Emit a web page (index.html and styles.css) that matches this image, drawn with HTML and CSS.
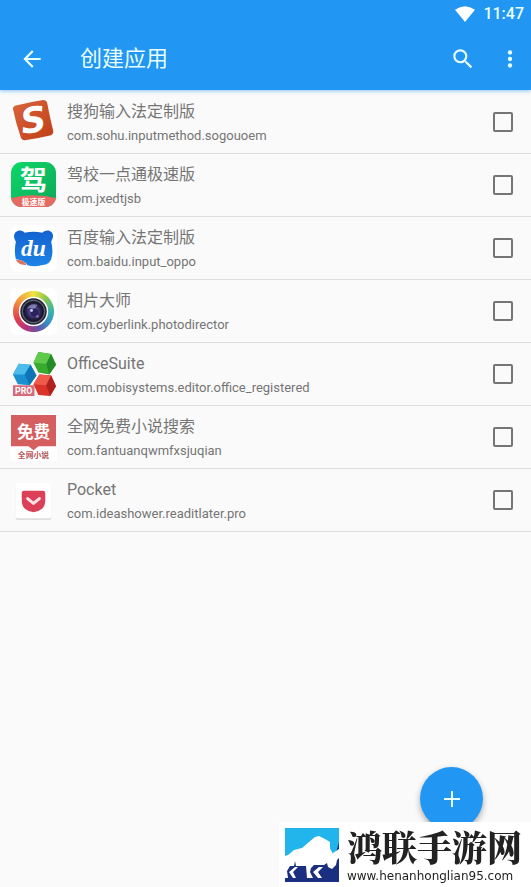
FILE: index.html
```html
<!DOCTYPE html>
<html lang="zh-CN">
<head>
<meta charset="utf-8">
<meta name="viewport" content="width=device-width, initial-scale=1">
<title>创建应用</title>
<link rel="stylesheet" href="styles.css">
</head>
<body>
<header class="app-bar">
  <div class="status-bar">
    <svg class="wifi" viewBox="0 0 20 16" aria-hidden="true"><path d="M0 3.800Q10-3.200 20 3.800L10 16Z"/></svg>
    <time class="clock">11:47</time>
  </div>
  <div class="toolbar">
    <button class="icon-button" type="button" aria-label="返回">
      <svg viewBox="0 0 24 24"><path d="M20 11H7.830l5.590-5.590L12 4l-8 8 8 8 1.410-1.410L7.830 13H20z"/></svg>
    </button>
    <h1 class="page-title">创建应用</h1>
    <button class="icon-button" type="button" aria-label="搜索">
      <svg viewBox="0 0 24 24"><path d="M15.500 14h-.790l-.280-.270A6.470 6.470 0 0 0 16 9.500 6.500 6.500 0 1 0 9.500 16c1.610 0 3.090-.590 4.230-1.570l.270.280v.790l5 4.990L20.490 19zm-6 0a4.500 4.500 0 1 1 0-9 4.500 4.500 0 0 1 0 9"/></svg>
    </button>
    <button class="icon-button menu-button" type="button" aria-label="更多">
      <svg viewBox="0 0 24 24"><circle cx="12" cy="6" r="2"/><circle cx="12" cy="12" r="2"/><circle cx="12" cy="18" r="2"/></svg>
    </button>
  </div>
</header>

<main>
  <ul class="app-list">
    <li><label class="app-row">
      <svg class="app-icon" viewBox="0 0 48 48" aria-hidden="true">
        <defs><linearGradient id="sogou" x1="0" y1="0" x2="1" y2="1"><stop offset="0" stop-color="#d9653d"/><stop offset="1" stop-color="#c03e17"/></linearGradient></defs>
        <path fill="url(#sogou)" d="M5 7Q20 3 34 1Q37 1 38 4Q40 15 44 32Q45 35 42 37Q30 40 15 42Q12 42 11 39Q6 25 3 10Q3 8 5 7Z"/>
        <text class="mark-s" x="24" y="34" transform="rotate(-8 24 23)">S</text>
      </svg>
      <span class="app-text"><span class="app-name">搜狗输入法定制版</span><span class="app-id">com.sohu.inputmethod.sogouoem</span></span>
      <input class="check" type="checkbox">
    </label></li>

    <li><label class="app-row">
      <svg class="app-icon" viewBox="0 0 48 48" aria-hidden="true">
        <defs><linearGradient id="drive" x1="0" y1="0" x2="1" y2="1"><stop offset="0" stop-color="#0bd968"/><stop offset="1" stop-color="#12a45a"/></linearGradient><clipPath id="drive-clip"><rect x="1" y="0" width="46" height="46" rx="11"/></clipPath></defs>
        <g clip-path="url(#drive-clip)"><path fill="url(#drive)" d="M0 0h48v48H0z"/><path fill="#e66a61" d="M0 37Q24 31 48 37V48H0z"/></g>
        <text class="mark-drive" x="24" y="29">驾</text>
        <text class="mark-speed" x="24" y="44">极速版</text>
      </svg>
      <span class="app-text"><span class="app-name">驾校一点通极速版</span><span class="app-id">com.jxedtjsb</span></span>
      <input class="check" type="checkbox">
    </label></li>

    <li><label class="app-row">
      <svg class="app-icon" viewBox="0 0 48 48" aria-hidden="true">
        <defs><linearGradient id="bear" x1="0" y1="0" x2="0" y2="1"><stop offset="0" stop-color="#1262cf"/><stop offset="1" stop-color="#1e84e6"/></linearGradient></defs>
        <rect width="48" height="48" rx="8" fill="#fff"/>
        <path fill="url(#bear)" d="M6 17C0 8 10 2 15 8Q24 6 33 8C39 2 48 8 42 17Q44 24 43 31Q42 41 32 41Q25 43 18 41Q15 36 6 35Q4 26 6 17Z"/>
        <path fill="#d9735e" d="M6 36Q14 35 17 41Q9 41 6 36Z"/>
        <text class="mark-du" x="24" y="32">du</text>
      </svg>
      <span class="app-text"><span class="app-name">百度输入法定制版</span><span class="app-id">com.baidu.input_oppo</span></span>
      <input class="check" type="checkbox">
    </label></li>

    <li><label class="app-row">
      <svg class="app-icon" viewBox="0 0 48 48" aria-hidden="true">
        <defs><radialGradient id="lens"><stop offset="0" stop-color="#7972c0"/><stop offset=".5" stop-color="#43377a"/><stop offset="1" stop-color="#101320"/></radialGradient></defs>
        <rect width="48" height="48" rx="6" fill="#fff"/>
        <foreignObject x="3" y="3" width="42" height="42"><div class="color-ring"></div></foreignObject>
        <circle cx="24" cy="24" r="15" fill="#fff"/>
        <circle cx="24" cy="24" r="13.500" fill="#242535"/>
        <circle cx="24" cy="24" r="11.500" fill="none" stroke="#707087" stroke-width="1"/>
        <circle cx="24" cy="24" r="10" fill="url(#lens)"/>
        <path d="M17 22Q20 15 28 17L25 22Q20 19 17 22Z" fill="#aaaedb" opacity=".6"/>
        <circle cx="25" cy="25" r="4" fill="#292359"/><circle cx="22" cy="23" r="1.500" fill="#c5cdef"/><circle cx="28" cy="29" r="1.500" fill="#8b63c1"/>
      </svg>
      <span class="app-text"><span class="app-name">相片大师</span><span class="app-id">com.cyberlink.photodirector</span></span>
      <input class="check" type="checkbox">
    </label></li>

    <li><label class="app-row">
      <svg class="app-icon" viewBox="0 0 48 48" aria-hidden="true">
        <path fill="#38aa30" d="M29 1L42 3 47 14 40 24 29 22 24 12Z"/><path fill="#5fc94a" d="M29 1L42 3 37 13 24 12Z"/><path fill="#238c27" d="M42 3L47 14 40 24 37 13Z"/>
        <path fill="#1b8fd0" d="M9 13L21 14 27 25 20 35 8 34 3 24Z"/><path fill="#4bbcec" d="M9 13L21 14 15 24 3 24Z"/><path fill="#0d75b4" d="M21 14L27 25 20 35 15 24Z"/>
        <path fill="#d9332b" d="M30 24L42 25 47 36 41 46 29 45 24 34Z"/><path fill="#ef5a4b" d="M30 24L42 25 37 35 24 34Z"/><path fill="#b0201f" d="M42 25L47 36 41 46 37 35Z"/>
        <rect x="3" y="35" width="22" height="11" fill="#d56b79"/>
        <text class="mark-pro" x="14" y="44">PRO</text>
      </svg>
      <span class="app-text"><span class="app-name">OfficeSuite</span><span class="app-id">com.mobisystems.editor.office_registered</span></span>
      <input class="check" type="checkbox">
    </label></li>

    <li><label class="app-row">
      <svg class="app-icon" viewBox="0 0 48 48" aria-hidden="true">
        <rect width="48" height="48" fill="#fff"/>
        <path fill="#d45e60" d="M1 1H47V33H29L24 37 19 33H1Z"/>
        <text class="mark-free" x="24" y="25">免费</text>
        <text class="mark-novel" x="24" y="45">全网小说</text>
      </svg>
      <span class="app-text"><span class="app-name">全网免费小说搜索</span><span class="app-id">com.fantuanqwmfxsjuqian</span></span>
      <input class="check" type="checkbox">
    </label></li>

    <li><label class="app-row">
      <svg class="app-icon" viewBox="0 0 48 48" aria-hidden="true">
        <rect x="6" y="7" width="36" height="37" rx="2" fill="#dedede"/><rect x="6" y="6" width="36" height="36" rx="2" fill="#fff"/>
        <path fill="#db4058" d="M14 14H34Q36 14 36 17V24Q36 30 32 33Q24 39 16 33Q12 30 12 24V17Q12 14 14 14Z"/>
        <path d="M18 22L24 27 30 22" fill="none" stroke="#ffe3e8" stroke-width="3" stroke-linecap="round" stroke-linejoin="round"/>
      </svg>
      <span class="app-text"><span class="app-name">Pocket</span><span class="app-id">com.ideashower.readitlater.pro</span></span>
      <input class="check" type="checkbox">
    </label></li>
  </ul>
</main>

<button class="fab" type="button" aria-label="添加"><svg viewBox="0 0 24 24"><path d="M12 4V20M4 12H20"/></svg></button>

<aside class="site-badge">
  <svg class="site-logo" viewBox="0 0 54 54" aria-hidden="true">
    <path fill="#22b5eb" d="M0 0H54V28H0Z"/><path fill="#1b2f80" d="M0 28H50L54 14V54H0Z"/>
    <path fill="#fff" d="M0 28L3 27 9 22 17 20 24 14 30 9 34 8 40 11 45 14 45 20 48 25 54 21V30L52 32 51 37 47 41 43 39 42 35 39 37 29 37 26 40 25 44 28 50H22L21 38H11L10 33 9 38H5L2 43 3 50H0Z"/>
    <path fill="#fff" d="M34 39H38L33 44 37 50H33L28 44ZM10 39H13L8 44 11 50H8L4 44Z"/>
    <path fill="#22b5eb" d="M48 9Q46 14 49 16Q53 19 51 23L48 22 48 26 45 20 45 14Z"/>
  </svg>
  <div class="site-text"><strong class="site-name">鸿联手游网</strong><span class="site-url">www.henanhonglian95.com</span></div>
</aside>
</body>
</html>
```
FILE: styles.css
```css
* {
  box-sizing: border-box;
}

body {
  margin: 0;
  min-height: 100vh;
  background: #fafafa;
  color: #757575;
  font-family: Roboto, "Noto Sans CJK SC", sans-serif;
}

button {
  padding: 0;
  border: 0;
  color: inherit;
}

.app-bar {
  position: relative;
  background: #2196f3;
  color: #e9ffff;
  box-shadow: 0 1px 4px #2196f388;
}

.status-bar {
  display: flex;
  align-items: center;
  justify-content: flex-end;
  gap: 8px;
  height: 28px;
  padding: 0 7px;
}

.wifi {
  width: 20px;
  height: 16px;
  fill: #fff;
}

.clock {
  font-size: 16px;
  font-weight: 500;
  line-height: 28px;
}

.toolbar {
  display: flex;
  align-items: center;
  height: 62px;
  padding: 0 5px 0 16px;
}

.icon-button {
  display: grid;
  place-items: center;
  width: 32px;
  height: 48px;
  background: none;
}

.icon-button svg {
  width: 26px;
  height: 26px;
  fill: currentColor;
}

.menu-button {
  margin-left: 15px;
}

.page-title {
  flex: 1;
  margin: 0 0 0 32px;
  font-size: 22px;
  font-weight: 400;
  line-height: 32px;
}

.app-list {
  margin: 0;
  padding: 1px 0 0;
  list-style: none;
}

.app-row {
  display: flex;
  align-items: center;
  gap: 10px;
  height: 63px;
  padding: 0 18px 0 10px;
  border-bottom: 1px solid #dedede;
}

.app-icon {
  flex: none;
  width: 47px;
  height: 47px;
}

.app-text {
  display: flex;
  flex: 1;
  flex-direction: column;
  gap: 2px;
  min-width: 0;
  padding-top: 2px;
}

.app-name {
  font-size: 16px;
  line-height: 24px;
}

.app-id {
  font-size: 13px;
  line-height: 20px;
}

.check {
  appearance: none;
  flex: none;
  width: 20px;
  height: 20px;
  margin: 0;
  border: 2px solid #757575;
  border-radius: 2px;
}

.check:checked {
  background: #2196f3;
  border-color: #2196f3;
}

.app-icon text {
  fill: #fff;
  text-anchor: middle;
  font-family: Roboto, "Noto Sans CJK SC", sans-serif;
  font-weight: 700;
}

.app-icon .mark-s {
  font-family: "DejaVu Sans", sans-serif;
  font-size: 36px;
  font-style: italic;
}

.app-icon .mark-drive {
  font-size: 28px;
}

.app-icon .mark-speed {
  font-size: 8px;
}

.app-icon .mark-du {
  font-family: "Liberation Serif", serif;
  font-size: 24px;
  font-style: italic;
}

.app-icon .mark-pro {
  font-size: 9px;
}

.app-icon .mark-free {
  font-size: 17px;
}

.app-icon .mark-novel {
  fill: #b5575a;
  font-size: 8px;
}

.color-ring {
  width: 42px;
  height: 42px;
  border-radius: 50%;
  background: conic-gradient(#f2e440, #83c551 45deg, #35b4b0 90deg, #398bc7 130deg, #6853a3 165deg, #b6337d 205deg, #e44249 250deg, #f48b3c 300deg, #f2e440);
}

.fab {
  position: fixed;
  right: 48px;
  bottom: 57px;
  display: grid;
  place-items: center;
  width: 63px;
  height: 63px;
  border-radius: 50%;
  background: #2196f3;
  box-shadow: 0 3px 6px #0005;
}

.fab svg {
  width: 24px;
  height: 24px;
  fill: none;
  stroke: #e9ffff;
  stroke-width: 2;
}

.site-badge {
  position: fixed;
  right: 0;
  bottom: 0;
  display: flex;
  align-items: center;
  gap: 8px;
  padding: 3px 9px 2px 6px;
  background: #fff;
  color: #222;
}

.site-logo {
  flex: none;
  width: 54px;
  height: 54px;
}

.site-text {
  display: flex;
  flex-direction: column;
}

.site-name {
  font-family: "Noto Serif CJK SC", "Noto Sans CJK SC", serif;
  font-size: 35px;
  font-weight: 900;
  line-height: 43px;
}

.site-url {
  font-family: "DejaVu Sans", sans-serif;
  font-size: 12px;
  line-height: 17px;
}
```
